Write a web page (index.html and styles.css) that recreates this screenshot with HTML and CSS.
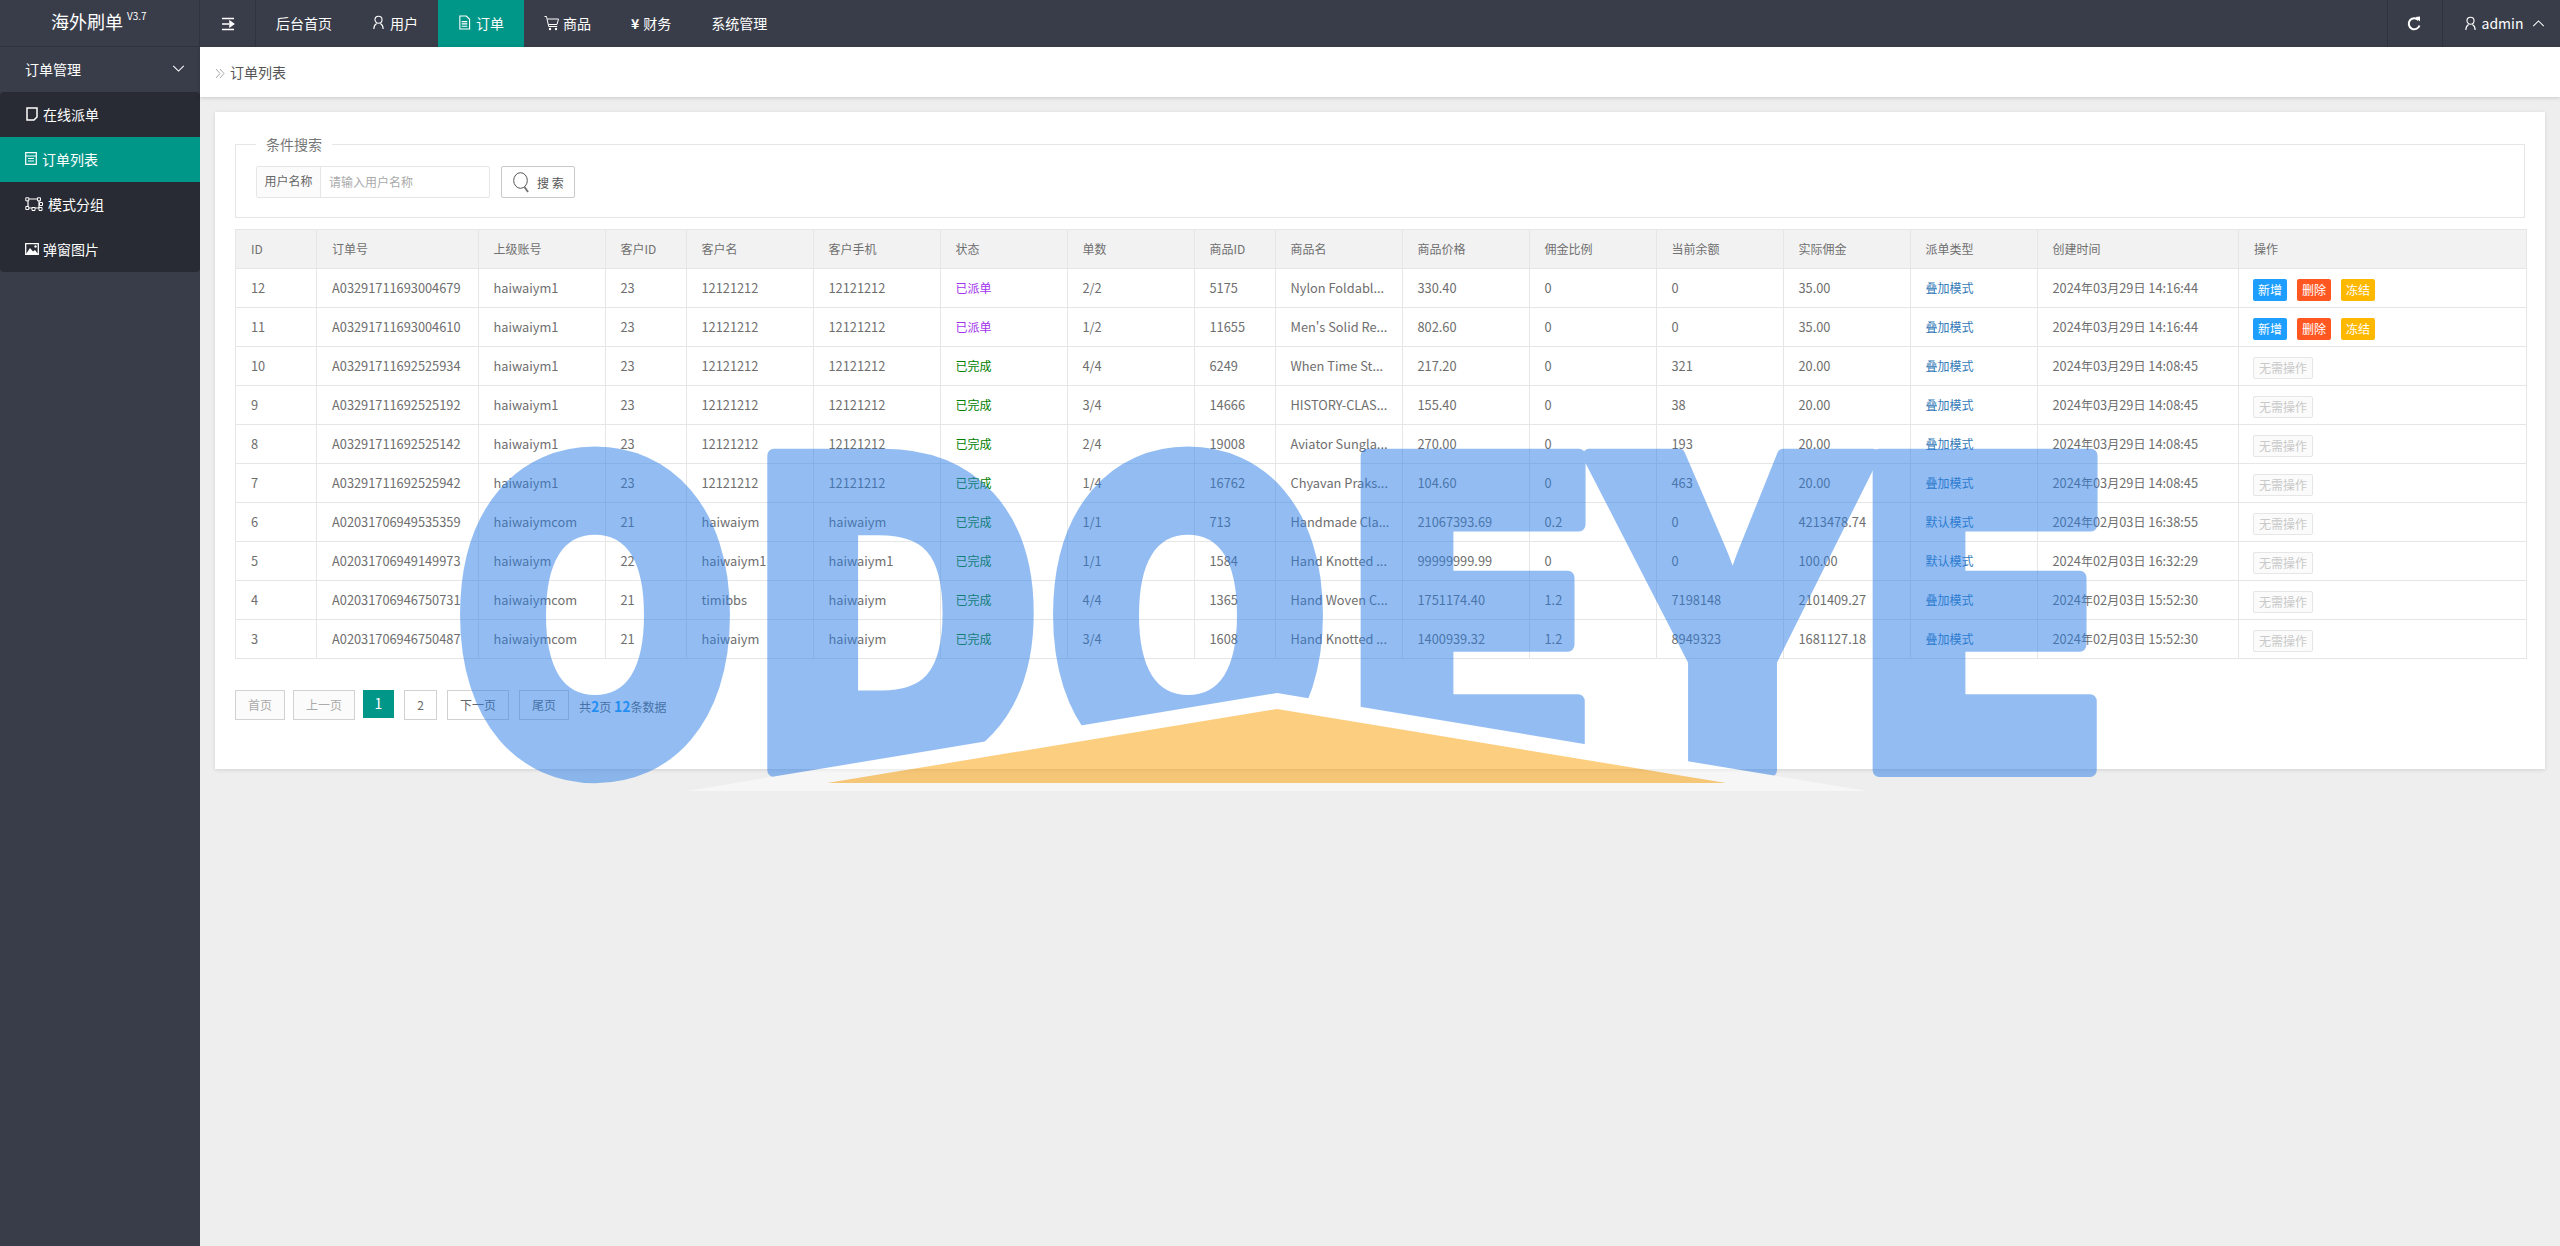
FILE: index.html
```html
<!DOCTYPE html>
<html lang="zh-CN">
<head>
<meta charset="utf-8">
<title>海外刷单</title>
<link rel="stylesheet" href="styles.css">
</head>
<body>
<header class="topbar">
  <div class="logo">海外刷单<sup class="ver">V3.7</sup></div>
  <nav class="nav">
    <a class="nav-toggle"><svg class="ic14" viewBox="0 0 14 14"><path d="M1 1.500h12M1 12.500h12M1 7h7M9 4.500 12.500 7 9 9.500z" fill="#fff" stroke="#fff" stroke-width="1.600"/></svg></a>
    <a class="nav-item">后台首页</a>
    <a class="nav-item"><svg class="ic-nav" viewBox="0 0 14 16"><circle cx="7" cy="5" r="3.800" fill="none" stroke="#fff" stroke-width="1.200"/><path d="M2 15c0-3 1.200-5 3-6M12 15c0-3-1.200-5-3-6" fill="none" stroke="#fff" stroke-width="1.200"/></svg>用户</a>
    <a class="nav-item active"><svg class="ic-nav" viewBox="0 0 14 16"><path d="M2 1h7l3.500 3.500V15H2zM4 7h6M4 9.500h6M4 12h6" fill="none" stroke="#fff" stroke-width="1.200"/></svg>订单</a>
    <a class="nav-item"><svg class="ic-cart" viewBox="0 0 16 16"><path d="M.5 1.500h2l2.200 10h8.500M3.500 4h11l-1.500 5.500H4.500" fill="none" stroke="#fff" stroke-width="1"/><circle cx="6" cy="14" r="1.200" fill="#fff"/><circle cx="12" cy="14" r="1.200" fill="#fff"/></svg>商品</a>
    <a class="nav-item"><span class="yen">¥</span>财务</a>
    <a class="nav-item">系统管理</a>
  </nav>
  <div class="nav-right">
    <a class="nav-refresh"><svg class="ic-ref" viewBox="0 0 14 16"><path d="M11.500 4.200A5.500 5.500 0 1 0 12.500 9.500" fill="none" stroke="#fff" stroke-width="2"/><path d="M8.500 1 13 .5 13 5.500z" fill="#fff"/></svg></a>
    <a class="nav-user"><svg class="ic-nav" viewBox="0 0 14 16"><circle cx="7" cy="5" r="3.800" fill="none" stroke="#fff" stroke-width="1.200"/><path d="M2 15c0-3 1.200-5 3-6M12 15c0-3-1.200-5-3-6" fill="none" stroke="#fff" stroke-width="1.200"/></svg>admin<svg class="ic-chev up" viewBox="0 0 14 8"><path d="M1 7 7 1l6 6" fill="none" stroke="#fff" stroke-width="1.200"/></svg></a>
  </div>
</header>
<div class="layout">
  <aside class="side">
    <div class="side-head">订单管理<svg class="ic-chev" viewBox="0 0 14 8"><path d="M1 1l6 6 6-6" fill="none" stroke="#fff" stroke-width="1.200"/></svg></div>
    <ul class="side-menu">
      <li class="side-item"><svg class="ic-s1" viewBox="0 0 12 14"><path d="M1 1h10v9l-3 3H1z" fill="none" stroke="#fff" stroke-width="1.500"/></svg>在线派单</li>
      <li class="side-item active"><svg class="ic-s2" viewBox="0 0 12 13"><path d="M.7.7h10.600v11.600H.7zM1 4h10M3 6.500h6M3 9h6" fill="none" stroke="#fff" stroke-width="1.200"/></svg>订单列表</li>
      <li class="side-item"><svg class="ic-s3" viewBox="0 0 18 14"><path d="M3 2h11v9H3z" fill="none" stroke="#fff" stroke-width="1.200"/><path d="M.8.8h3v3h-3zM12.500.8h3v3h-3zM14.500 5.500h3v3h-3zM.8 9.500h3v3h-3zM7 10.500h3v3H7zM14 10.500h3v3h-3z" fill="#282b33" stroke="#fff" stroke-width="1"/></svg>模式分组</li>
      <li class="side-item"><svg class="ic-s4" viewBox="0 0 14 12"><path d="M.7.7h12.600v10.600H.7z" fill="none" stroke="#fff" stroke-width="1.300"/><path d="M1 11 5 5l3 3.500 2-1.500 3 4z" fill="#fff"/><circle cx="10.500" cy="3.500" r="1.200" fill="#fff"/></svg>弹窗图片</li>
    </ul>
  </aside>
  <main class="main">
    <div class="crumb"><svg class="ic-crumb" viewBox="0 0 10 11"><path d="M1 1l4 4.500L1 10M5 1l4 4.500L5 10" fill="none" stroke="#aaa" stroke-width="1"/></svg>订单列表</div>
    <section class="card">
      <fieldset class="filter">
        <legend class="filter-title">条件搜索</legend>
        <div class="filter-row">
          <div class="field">
            <span class="field-label">用户名称</span>
            <input class="field-input" type="text" placeholder="请输入用户名称">
          </div>
          <button class="search-btn" type="button"><svg class="ic-search" viewBox="0 0 17 21"><ellipse cx="7.500" cy="8.500" rx="6.800" ry="7.800" fill="none" stroke="#555" stroke-width="1"/><path d="M11.500 15l3.500 5" stroke="#777" stroke-width="2"/></svg>搜 索</button>
        </div>
      </fieldset>
      <table class="grid">
        <colgroup>
          <col class="c81"><col class="c161"><col class="c127"><col class="c81"><col class="c127"><col class="c127"><col class="c127"><col class="c127"><col class="c81"><col class="c127"><col class="c127"><col class="c127"><col class="c127"><col class="c127"><col class="c127"><col class="c201"><col class="c287">
        </colgroup>
        <thead>
          <tr><th>ID</th><th>订单号</th><th>上级账号</th><th>客户ID</th><th>客户名</th><th>客户手机</th><th>状态</th><th>单数</th><th>商品ID</th><th>商品名</th><th>商品价格</th><th>佣金比例</th><th>当前余额</th><th>实际佣金</th><th>派单类型</th><th>创建时间</th><th>操作</th></tr>
        </thead>
        <tbody>
          <tr><td>12</td><td>A03291711693004679</td><td>haiwaiym1</td><td>23</td><td>12121212</td><td>12121212</td><td class="st-new">已派单</td><td>2/2</td><td>5175</td><td>Nylon Foldabl...</td><td>330.40</td><td>0</td><td>0</td><td>35.00</td><td class="mode">叠加模式</td><td>2024<i class="cn">年</i>03<i class="cn">月</i>29<i class="cn">日</i> 14:16:44</td><td class="ops"><a class="btn blue">新增</a><a class="btn red">删除</a><a class="btn amber">冻结</a></td></tr>
          <tr><td>11</td><td>A03291711693004610</td><td>haiwaiym1</td><td>23</td><td>12121212</td><td>12121212</td><td class="st-new">已派单</td><td>1/2</td><td>11655</td><td>Men's Solid Re...</td><td>802.60</td><td>0</td><td>0</td><td>35.00</td><td class="mode">叠加模式</td><td>2024<i class="cn">年</i>03<i class="cn">月</i>29<i class="cn">日</i> 14:16:44</td><td class="ops"><a class="btn blue">新增</a><a class="btn red">删除</a><a class="btn amber">冻结</a></td></tr>
          <tr><td>10</td><td>A03291711692525934</td><td>haiwaiym1</td><td>23</td><td>12121212</td><td>12121212</td><td class="st-done">已完成</td><td>4/4</td><td>6249</td><td>When Time St...</td><td>217.20</td><td>0</td><td>321</td><td>20.00</td><td class="mode">叠加模式</td><td>2024<i class="cn">年</i>03<i class="cn">月</i>29<i class="cn">日</i> 14:08:45</td><td class="ops"><a class="btn off">无需操作</a></td></tr>
          <tr><td>9</td><td>A03291711692525192</td><td>haiwaiym1</td><td>23</td><td>12121212</td><td>12121212</td><td class="st-done">已完成</td><td>3/4</td><td>14666</td><td>HISTORY-CLAS...</td><td>155.40</td><td>0</td><td>38</td><td>20.00</td><td class="mode">叠加模式</td><td>2024<i class="cn">年</i>03<i class="cn">月</i>29<i class="cn">日</i> 14:08:45</td><td class="ops"><a class="btn off">无需操作</a></td></tr>
          <tr><td>8</td><td>A03291711692525142</td><td>haiwaiym1</td><td>23</td><td>12121212</td><td>12121212</td><td class="st-done">已完成</td><td>2/4</td><td>19008</td><td>Aviator Sungla...</td><td>270.00</td><td>0</td><td>193</td><td>20.00</td><td class="mode">叠加模式</td><td>2024<i class="cn">年</i>03<i class="cn">月</i>29<i class="cn">日</i> 14:08:45</td><td class="ops"><a class="btn off">无需操作</a></td></tr>
          <tr><td>7</td><td>A03291711692525942</td><td>haiwaiym1</td><td>23</td><td>12121212</td><td>12121212</td><td class="st-done">已完成</td><td>1/4</td><td>16762</td><td>Chyavan Praks...</td><td>104.60</td><td>0</td><td>463</td><td>20.00</td><td class="mode">叠加模式</td><td>2024<i class="cn">年</i>03<i class="cn">月</i>29<i class="cn">日</i> 14:08:45</td><td class="ops"><a class="btn off">无需操作</a></td></tr>
          <tr><td>6</td><td>A02031706949535359</td><td>haiwaiymcom</td><td>21</td><td>haiwaiym</td><td>haiwaiym</td><td class="st-done">已完成</td><td>1/1</td><td>713</td><td>Handmade Cla...</td><td>21067393.69</td><td>0.2</td><td>0</td><td>4213478.74</td><td class="mode">默认模式</td><td>2024<i class="cn">年</i>02<i class="cn">月</i>03<i class="cn">日</i> 16:38:55</td><td class="ops"><a class="btn off">无需操作</a></td></tr>
          <tr><td>5</td><td>A02031706949149973</td><td>haiwaiym</td><td>22</td><td>haiwaiym1</td><td>haiwaiym1</td><td class="st-done">已完成</td><td>1/1</td><td>1584</td><td>Hand Knotted ...</td><td>99999999.99</td><td>0</td><td>0</td><td>100.00</td><td class="mode">默认模式</td><td>2024<i class="cn">年</i>02<i class="cn">月</i>03<i class="cn">日</i> 16:32:29</td><td class="ops"><a class="btn off">无需操作</a></td></tr>
          <tr><td>4</td><td>A02031706946750731</td><td>haiwaiymcom</td><td>21</td><td>timibbs</td><td>haiwaiym</td><td class="st-done">已完成</td><td>4/4</td><td>1365</td><td>Hand Woven C...</td><td>1751174.40</td><td>1.2</td><td>7198148</td><td>2101409.27</td><td class="mode">叠加模式</td><td>2024<i class="cn">年</i>02<i class="cn">月</i>03<i class="cn">日</i> 15:52:30</td><td class="ops"><a class="btn off">无需操作</a></td></tr>
          <tr><td>3</td><td>A02031706946750487</td><td>haiwaiymcom</td><td>21</td><td>haiwaiym</td><td>haiwaiym</td><td class="st-done">已完成</td><td>3/4</td><td>1608</td><td>Hand Knotted ...</td><td>1400939.32</td><td>1.2</td><td>8949323</td><td>1681127.18</td><td class="mode">叠加模式</td><td>2024<i class="cn">年</i>02<i class="cn">月</i>03<i class="cn">日</i> 15:52:30</td><td class="ops"><a class="btn off">无需操作</a></td></tr>
        </tbody>
      </table>
      <div class="pager">
        <a class="pg w50 dim">首页</a>
        <a class="pg w62 dim">上一页</a>
        <a class="pg cur">1</a>
        <a class="pg w33">2</a>
        <a class="pg w62">下一页</a>
        <a class="pg w50">尾页</a>
        <span class="pg-info">共<b>2</b>页 <b>12</b>条数据</span>
      </div>
    </section>
  </main>
</div>
<svg class="watermark" viewBox="0 0 2560 1246" aria-label="ODOEYE">
  <g opacity=".5">
    <g class="wm-text">
      <text transform="translate(595 772) scale(.845 1)" text-anchor="middle">O</text>
      <text transform="translate(898 770) scale(.915 1)" text-anchor="middle">D</text>
      <text transform="translate(1188 772) scale(.845 1)" text-anchor="middle">O</text>
      <text transform="translate(1472 770) scale(.935 1)" text-anchor="middle">E</text>
      <text transform="translate(1731 770) scale(.9 1)" text-anchor="middle">Y</text>
      <text transform="translate(1984 770) scale(.935 1)" text-anchor="middle">E</text>
    </g>
    <polygon points="1277,693 1867,791 687,791" fill="#fff"/>
    <polygon points="1277,709 1726,783 827,783" fill="#fb9f01"/>
  </g>
</svg>
</body>
</html>
```
FILE: styles.css
```css
* { box-sizing: border-box; }
html, body { margin: 0; padding: 0; }
body {
  position: relative;
  width: 2560px;
  height: 1246px;
  overflow: hidden;
  background: #eee;
  font-family: "Noto Sans CJK SC", "Noto Sans", sans-serif;
  font-size: 14px;
  color: #666;
  display: flex;
  flex-direction: column;
}
a { color: inherit; text-decoration: none; }
ul { list-style: none; margin: 0; padding: 0; }
svg { display: block; flex: none; }
i { font-style: normal; }

/* top bar */
.topbar {
  height: 47px;
  flex: none;
  display: flex;
  align-items: stretch;
  background: #393d49;
  color: #fff;
}
.logo {
  width: 200px;
  flex: none;
  padding: 11px 0 0 51px;
  font-size: 18px;
  line-height: 20px;
  border-right: 1px solid #2f333e;
  border-bottom: 1px solid #2f333e;
}
.ver { font-size: 10px; line-height: 10px; vertical-align: 9px; margin-left: 4px; }
.nav { display: flex; flex: 1; }
.nav-toggle {
  width: 56px;
  display: flex;
  align-items: center;
  justify-content: center;
  border-right: 1px solid #2f333e;
}
.ic14 { width: 14px; height: 14px; }
.nav-item {
  display: flex;
  align-items: center;
  padding: 0 20px 2px;
  gap: 5px;
  height: 47px;
}
.nav-item.active { background: #009688; }
.ic-nav { width: 13px; height: 15px; }
.ic-cart { width: 16px; height: 16px; margin-right: -2px; }
.yen { font-size: 14px; font-weight: 700; line-height: 1; margin-right: -1px; }
.nav-right { display: flex; }
.nav-refresh {
  width: 56px;
  display: flex;
  align-items: center;
  justify-content: center;
  border-left: 1px solid #2f333e;
  border-right: 1px solid #2f333e;
}
.ic-ref { width: 14px; height: 16px; margin-right: 2px; }
.nav-user {
  width: 117.500px;
  padding: 0 0 1px 21px;
  display: flex;
  align-items: center;
  gap: 5px;
  font-size: 14px;
}
.ic-chev { width: 13px; height: 7px; }
.ic-chev.up { margin-left: 4px; }

/* layout */
.layout { flex: 1; display: flex; min-height: 0; }
.side { width: 200px; flex: none; background: #393d49; color: #fff; }
.side-head {
  height: 45px;
  padding: 0 15px 2px 25px;
  display: flex;
  align-items: center;
  justify-content: space-between;
}
.side-menu { background: #282b33; border-radius: 4px; overflow: hidden; }
.side-item {
  height: 45px;
  padding: 0 0 2px 25px;
  display: flex;
  align-items: center;
  gap: 5px;
}
.side-item.active { background: #009688; }
.ic-s1 { width: 12px; height: 14px; margin-left: 1px; }
.ic-s2 { width: 12px; height: 13px; }
.ic-s3 { width: 18px; height: 14px; }
.ic-s4 { width: 14px; height: 12px; margin-right: -1px; }

/* main */
.main { flex: 1; min-width: 0; }
.crumb {
  height: 50px;
  background: #fff;
  padding: 0 0 1px 15px;
  display: flex;
  align-items: center;
  gap: 5px;
  color: #555;
  box-shadow: 0 1px 4px rgba(0, 0, 0, .16);
}
.ic-crumb { width: 10px; height: 11px; margin-top: 3px; }
.card {
  margin: 15px 15px 0;
  background: #fff;
  height: 657px;
  padding: 22px 20px 0;
  box-shadow: 0 1px 4px rgba(0, 0, 0, .12);
}

/* filter */
.filter {
  margin: 0;
  padding: 12px 20px 19px;
  border: 1px solid #e6e6e6;
  height: 84px;
}
.filter-title {
  margin-left: 0;
  padding: 0 10px;
  font-size: 14px;
  line-height: 20px;
  color: #777;
}
.filter-row { display: flex; gap: 11px; height: 32px; }
.field {
  width: 234px;
  display: flex;
  border: 1px solid #e6e6e6;
  border-radius: 2px;
  height: 32px;
}
.field-label {
  width: 64px;
  background: #fbfbfb;
  border-right: 1px solid #e6e6e6;
  font-size: 12px;
  line-height: 28px;
  text-align: center;
  color: #666;
}
.field-input {
  flex: 1;
  min-width: 0;
  border: 0;
  padding: 0 8px 2px;
  font: 12px "Noto Sans CJK SC", sans-serif;
  background: transparent;
}
.field-input::placeholder { color: #aaa; opacity: 1; }
.search-btn {
  width: 74px;
  height: 32px;
  background: #fff;
  border: 1px solid #c9c9c9;
  border-radius: 2px;
  padding: 0 0 0 11px;
  display: flex;
  align-items: center;
  gap: 7px;
  font: 12px "Noto Sans CJK SC", sans-serif;
  color: #555;
}
.ic-search { width: 17px; height: 21px; }

/* table */
.grid {
  table-layout: fixed;
  border-collapse: collapse;
  width: 2289px;
  margin-top: 11px;
}
.c81 { width: 81px; }
.c161 { width: 161.500px; }
.c127 { width: 127px; }
.c201 { width: 201.500px; }
.c287 { width: 287.500px; }
.grid th, .grid td {
  height: 39px;
  padding: 0 0 2px 15px;
  border: 1px solid #e6e6e6;
  text-align: left;
  white-space: nowrap;
  overflow: hidden;
  font-weight: 400;
  vertical-align: middle;
}
.grid th { background: #f2f2f2; font-size: 12px; color: #707070; }
.grid td { font-size: 12.800px; color: #6e6e6e; }
.cn { font-size: 12px; }
.grid td.st-new { font-size: 12px; color: #a233ee; }
.grid td.st-done { font-size: 12px; color: #008000; }
.grid td.mode { font-size: 12px; color: #337ab7; }
.grid td.ops { padding: 10px 0 0 14px; vertical-align: top; }
.btn {
  display: inline-block;
  height: 22px;
  line-height: 21px;
  width: 34px;
  margin-right: 10px;
  font-size: 12px;
  text-align: center;
  color: #fff;
  border-radius: 2px;
  vertical-align: top;
}
.btn.blue { background: #1e9fff; }
.btn.red { background: #ff5722; }
.btn.amber { background: #ffb800; }
.btn.off {
  width: 60px;
  line-height: 19px;
  background: #fbfbfb;
  border: 1px solid #e6e6e6;
  color: #c9c9c9;
}

/* pager */
.pager { display: flex; align-items: flex-start; margin-top: 31px; font-size: 12px; }
.pg {
  height: 30px;
  margin-right: 10px;
  padding-bottom: 2px;
  border: 1px solid #d2d2d2;
  background: #fff;
  display: flex;
  align-items: center;
  justify-content: center;
  color: #666;
}
.w50 { width: 50px; }
.w62 { width: 62px; }
.w33 { width: 33px; }
.dim { color: #aaa; background: #fbfbfb; margin-right: 8px; }
.cur { width: 31px; height: 28px; background: #009688; border-color: #009688; color: #fff; font-size: 14px; }
.pg-info { line-height: 32px; color: #666; }
.pg-info b { color: #1e9fff; font-size: 14px; }

/* watermark */
.watermark {
  position: absolute;
  left: 0;
  top: 0;
  width: 2560px;
  height: 1246px;
  pointer-events: none;
}
.wm-text {
  font-family: Inter, "DejaVu Sans", sans-serif;
  font-weight: 900;
  font-size: 432px;
  fill: #297de7;
  stroke: #297de7;
  stroke-width: 14px;
  stroke-linejoin: round;
}
```
